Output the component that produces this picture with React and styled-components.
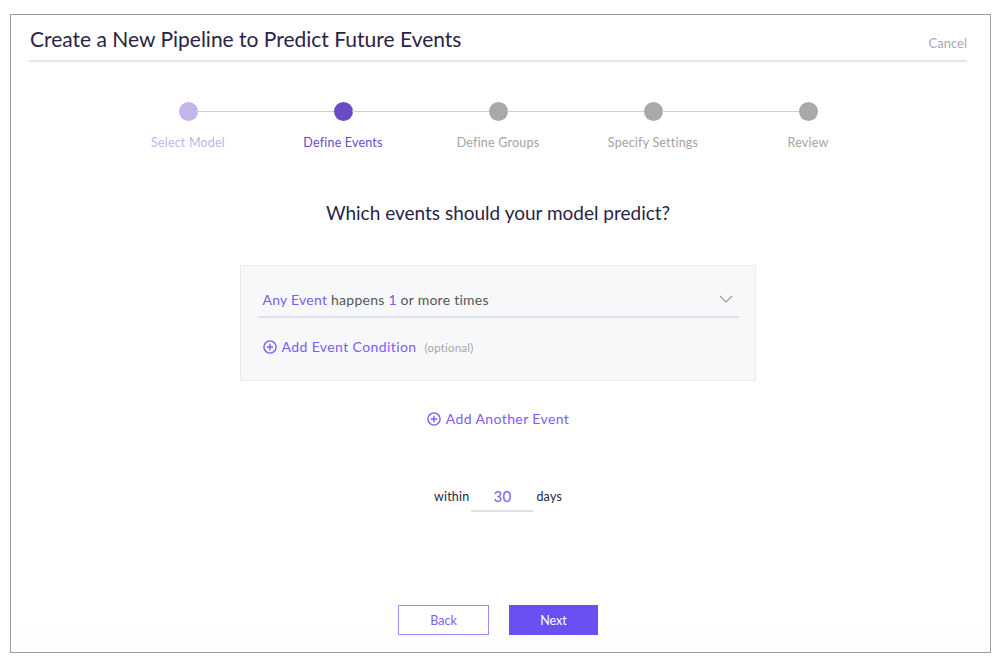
import React from "react";
import styled, { createGlobalStyle } from "styled-components";

const GlobalStyle = createGlobalStyle`
  body {
    margin: 0;
    background: #fff;
    font-family: "Lato", "Liberation Sans", sans-serif;
  }
`;

const purple = "#7b5cf5";

const Frame = styled.div`
  margin: 14px 0 0 10px;
  width: 981px;
  height: 639px;
  box-sizing: border-box;
  border: 1px solid #9d9d9d;
  padding: 0 23px 0 18px;
  display: flex;
  flex-direction: column;
  background: linear-gradient(to bottom, #fff 0, #fff 612px, #fcfcfc 640px);
`;

const Header = styled.div`
  height: 47px;
  display: flex;
  align-items: center;
  justify-content: space-between;
  border-bottom: 2px solid #e6e6e6;
  padding: 2px 0 0 1px;
  box-sizing: border-box;
`;

const Title = styled.h1`
  margin: 0;
  font-size: 21px;
  font-weight: 400;
  color: #2a2446;
`;

const Cancel = styled.span`
  font-size: 13px;
  color: #ababab;
  margin-top: 8px;
`;

const Stepper = styled.div`
  display: flex;
  justify-content: center;
  margin-top: 40px;
`;

const Step = styled.div`
  width: 155px;
  display: flex;
  flex-direction: column;
  align-items: center;
  position: relative;
  &:not(:last-child)::after {
    content: "";
    position: absolute;
    top: 9px;
    left: calc(50% + 9px);
    width: 137px;
    height: 1px;
    background: #cfcfcf;
  }
`;

const Dot = styled.div`
  width: 19px;
  height: 19px;
  border-radius: 50%;
  background: ${(p) => p.$color};
`;

const StepLabel = styled.div`
  margin-top: 14px;
  font-size: 12.5px;
  letter-spacing: 0.2px;
  color: ${(p) => p.$color};
`;

const Question = styled.h2`
  margin: 51px 0 0;
  text-align: center;
  font-size: 19px;
  font-weight: 400;
  color: #2a2446;
`;

const Card = styled.div`
  align-self: center;
  width: 516px;
  box-sizing: border-box;
  margin-top: 41px;
  margin-left: -1px;
  background: #f7f8fa;
  border: 1px solid #ececee;
  padding: 20px 16px 25px 17px;
`;

const EventRow = styled.div`
  display: flex;
  align-items: center;
  justify-content: space-between;
  height: 32px;
  box-sizing: border-box;
  border-bottom: 2px solid #e2e2e6;
  padding: 0 6px 4px 5px;
  font-size: 14px;
  letter-spacing: 0.25px;
  color: #555;
`;

const Accent = styled.span`
  color: ${purple};
`;

const AddLink = styled.div`
  display: flex;
  align-items: center;
  justify-content: ${(p) => (p.$center ? "center" : "flex-start")};
  gap: 5px;
  font-size: 14px;
  letter-spacing: 0.4px;
  color: ${purple};
  padding-left: ${(p) => (p.$center ? "0" : "5px")};
`;

const CondRow = styled(AddLink)`
  margin-top: 20px;
`;

const Optional = styled.span`
  font-size: 11.5px;
  letter-spacing: 0.2px;
  color: #a5a5a5;
  margin-left: 3px;
  margin-top: 2px;
`;

const AnotherEvent = styled(AddLink)`
  margin-top: 29px;
`;

const Within = styled.div`
  margin-top: 54px;
  display: flex;
  justify-content: center;
  align-items: center;
  font-size: 12.5px;
  letter-spacing: 0.2px;
  color: #2a2446;
`;

const DaysInput = styled.div`
  width: 62px;
  margin: 4px 3px 0 2px;
  text-align: center;
  font-size: 15px;
  color: ${purple};
  border-bottom: 2px solid #e0e0e0;
  padding: 2px 0 5px;
`;

const Footer = styled.div`
  margin-top: auto;
  margin-bottom: 17px;
  display: flex;
  justify-content: center;
  gap: 20px;
`;

const Button = styled.button`
  width: ${(p) => (p.$primary ? "89px" : "91px")};
  height: 30px;
  font-family: inherit;
  font-size: 12.5px;
  border: 1px solid ${(p) => (p.$primary ? "#6a50f2" : "#a08bf8")};
  background: ${(p) => (p.$primary ? "#6a50f2" : "#fff")};
  color: ${(p) => (p.$primary ? "#fff" : "#7a62f0")};
  cursor: pointer;
`;

const PlusCircle = () => (
  <svg width="14" height="14" viewBox="0 0 14 14" fill="none">
    <circle cx="7" cy="7" r="6.1" stroke={purple} strokeWidth="1.4" />
    <path d="M7 3.8v6.4M3.8 7h6.4" stroke={purple} strokeWidth="1.4" />
  </svg>
);

const Chevron = () => (
  <svg width="14" height="8" viewBox="0 0 14 8" fill="none">
    <path d="M1 1l6 6 6-6" stroke="#9a9a9a" strokeWidth="1.2" />
  </svg>
);

const steps = [
  { label: "Select Model", dot: "#c3b4ea", text: "#c1b3ec" },
  { label: "Define Events", dot: "#6a4bc6", text: "#6a4bc6" },
  { label: "Define Groups", dot: "#a9a9a9", text: "#a3a3a3" },
  { label: "Specify Settings", dot: "#a9a9a9", text: "#a3a3a3" },
  { label: "Review", dot: "#a9a9a9", text: "#a3a3a3" },
];

export default function App() {
  return (
    <>
      <GlobalStyle />
      <Frame>
        <Header>
          <Title>Create a New Pipeline to Predict Future Events</Title>
          <Cancel>Cancel</Cancel>
        </Header>

        <Stepper>
          {steps.map((s) => (
            <Step key={s.label}>
              <Dot $color={s.dot} />
              <StepLabel $color={s.text}>{s.label}</StepLabel>
            </Step>
          ))}
        </Stepper>

        <Question>Which events should your model predict?</Question>

        <Card>
          <EventRow>
            <span>
              <Accent>Any Event</Accent> happens <Accent>1</Accent> or more times
            </span>
            <Chevron />
          </EventRow>
          <CondRow>
            <PlusCircle />
            <span>Add Event Condition</span>
            <Optional>(optional)</Optional>
          </CondRow>
        </Card>

        <AnotherEvent $center>
          <PlusCircle />
          <span>Add Another Event</span>
        </AnotherEvent>

        <Within>
          <span>within</span>
          <DaysInput>30</DaysInput>
          <span>days</span>
        </Within>

        <Footer>
          <Button>Back</Button>
          <Button $primary>Next</Button>
        </Footer>
      </Frame>
    </>
  );
}
